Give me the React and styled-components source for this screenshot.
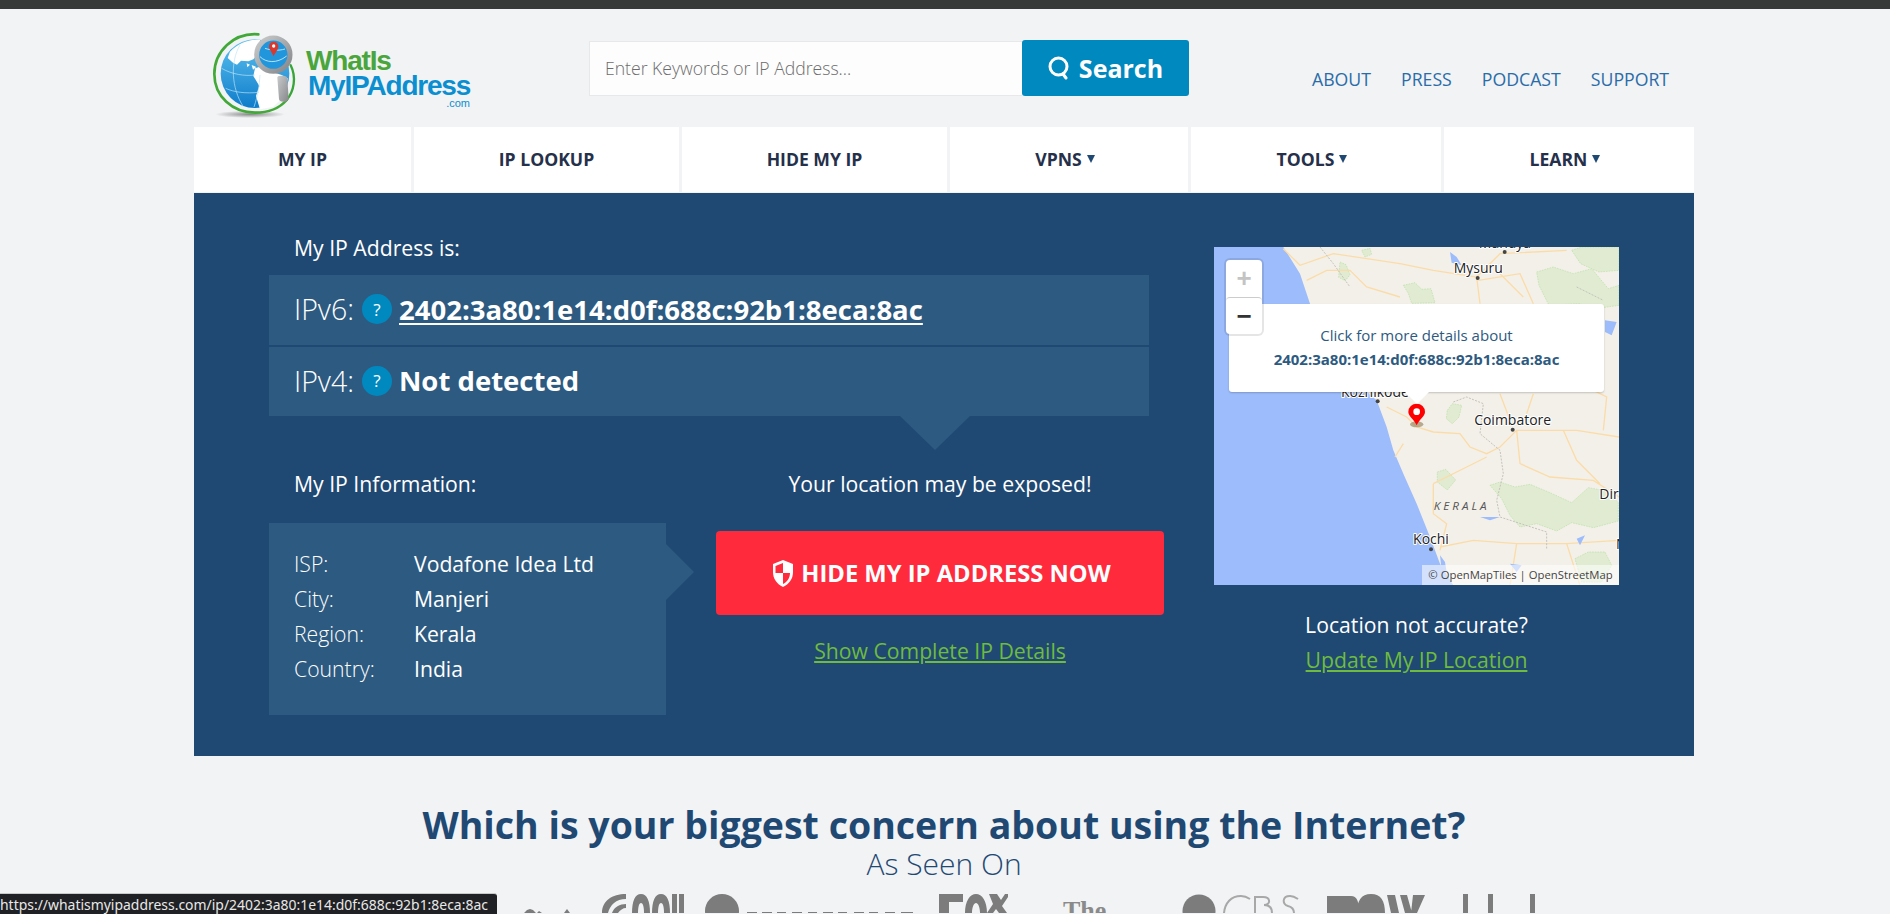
import React from "react";
import styled, { createGlobalStyle } from "styled-components";

const Global = createGlobalStyle`
  html, body { margin: 0; padding: 0; height: 914px; overflow: hidden; background: #f1f3f5; }
  * { box-sizing: border-box; }
  body { font-family: "Open Sans", "Liberation Sans", sans-serif; }
`;
const TopStrip = styled.div`height: 9px; background: #373838;`;
const Page = styled.div`width: 1500px; margin-left: 194px;`;
const Header = styled.header`height: 118px; display: flex;`;
const Logo = styled.a`width: 395px; height: 118px; position: relative; display: block; flex: none;`;
const LogoArt = styled.svg`position: absolute; left: 11px; top: 16px;`;
const LogoText = styled.div`
  position: absolute; left: 112px; top: 39px; width: 164px;
  font-family: "Liberation Sans", Arial, sans-serif; font-weight: 700;
`;
const LogoGreen = styled.div`color: #4aa63c; font-size: 28px; line-height: 25px; letter-spacing: -1.2px;`;
const LogoBlue = styled.div`color: #0b8fd0; font-size: 28px; line-height: 25px; margin-left: 2px; letter-spacing: -1.2px; white-space: nowrap;`;
const LogoCom = styled.div`color: #0b8fd0; font-size: 11px; line-height: 11px; font-weight: 400; text-align: right;`;
const SearchForm = styled.form`display: flex; margin-top: 31px; height: 56px; align-items: flex-start;`;
const SearchInput = styled.div`
  width: 433px; height: 55px; margin-top: 1px; background: #fdfdfd; border: 1px solid #e7e8ea; border-right: none;
  padding-left: 15px; font-size: 17.6px; font-weight: 300; color: #6c6c6c; line-height: 53px;
`;
const SearchButton = styled.div`
  width: 167px; height: 56px; background: #0089bf; border-radius: 3px; color: #fff; font-weight: 700; font-size: 25px;
  display: flex; align-items: center; justify-content: center; gap: 9px;
`;
const TopLinks = styled.nav`display: flex; gap: 30px; margin-left: 123px; margin-top: 57px; height: 26px;`;
const TopLink = styled.a`color: #2b6ca8; font-size: 17.7px; line-height: 26px;`;
const NavBar = styled.nav`
  display: grid; grid-template-columns: 217px 265px 265px 238px 250px 1fr; column-gap: 3px; height: 65px; margin-bottom: 1px;
`;
const NavCell = styled.a`
  background: #fff; color: #25304a; font-weight: 700; font-size: 17.6px; padding-bottom: 2px;
  display: flex; align-items: center; justify-content: center; gap: 5px;
`;
const Caret = styled.span`
  width: 0; height: 0; margin-right: 8px; border-left: 4px solid transparent; border-right: 4px solid transparent; border-top: 8px solid #1f4973;
`;
const Hero = styled.section`
  height: 563px; background: #1f4973; padding: 0 75px; display: grid; grid-template-columns: 880px 1fr; color: #fff;
`;
const Left = styled.div`display: flex; flex-direction: column;`;
const Label = styled.div`font-size: 21.2px; line-height: 28px; padding-left: 25px; font-weight: 400;`;
const IpLabelTop = styled(Label)`margin-top: 41px; margin-bottom: 13px;`;
const IpRow = styled.div`
  height: ${(p) => p.$h}px; background: #2d5a80; display: flex; align-items: center; padding: 0 0 2px 25px; margin-bottom: 2px; gap: 8px; position: relative;
  font-size: 28.5px; font-weight: 300;
`;
const Help = styled.span`
  width: 30px; height: 30px; border-radius: 50%; background: #0089bf; color: #fff; font-size: 17px; font-weight: 400;
  display: flex; align-items: center; justify-content: center;
`;
const IpLink = styled.a`font-size: 27.5px; font-weight: 700; margin-left: -1px; color: #fff; text-decoration: underline; text-decoration-thickness: 2px; text-underline-offset: 3px;`;
const IpStrong = styled.strong`font-size: 27.5px; font-weight: 700; margin-left: -1px;`;
const Notch = styled.span`
  position: absolute; left: 631px; top: 100%; width: 0; height: 0;
  border-left: 35px solid transparent; border-right: 35px solid transparent; border-top: 34px solid #2d5a80;
`;
const Lower = styled.div`display: grid; grid-template-columns: 425px 448px; column-gap: 22px; margin-top: 45px;`;
const InfoCol = styled.div`display: flex; flex-direction: column;`;
const InfoLabel = styled(Label)`margin-bottom: 25px; margin-top: 7px;`;
const InfoBox = styled.div`
  width: 397px; height: 192px; background: #2d5a80; padding: 23px 25px; position: relative;
  display: grid; grid-template-columns: 120px 1fr; grid-auto-rows: 35px; align-content: start; font-size: 21.2px; line-height: 35px;
  &::after {
    content: ""; position: absolute; left: 100%; top: 21px; width: 0; height: 0;
    border-top: 28px solid transparent; border-bottom: 28px solid transparent; border-left: 28px solid #2d5a80;
  }
`;
const InfoKey = styled.span`font-weight: 300;`;
const InfoVal = styled.span`font-weight: 400;`;
const CtaCol = styled.div`display: flex; flex-direction: column; align-items: center;`;
const Warn = styled.div`font-size: 21.2px; line-height: 28px; margin-top: 7px; margin-bottom: 33px;`;
const Cta = styled.a`
  width: 448px; height: 84px; background: #ff2a3c; border-radius: 4px; color: #fff; font-weight: 700; font-size: 23.75px;
  display: flex; align-items: center; justify-content: center; gap: 6px; padding-left: 2px;
`;
const GreenLink = styled.a`color: #6ebb3e; font-size: 21.2px; line-height: 28px; text-decoration: underline;`;
const CtaLink = styled(GreenLink)`margin-top: 22px;`;
const Right = styled.div`padding-top: 54px; display: flex; flex-direction: column; align-items: center; width: 405px; margin-left: 65px;`;
const MapBox = styled.div`width: 405px; height: 338px; position: relative; overflow: hidden; background: #9dbcfb; flex: none;`;
const MapArt = styled.svg`display: block;`;
const ZoomCtl = styled.div`
  position: absolute; left: 12px; top: 13px; width: 36px; height: 74px; background: #fff; border-radius: 4px; box-shadow: 0 0 0 2px rgba(0,0,0,.1);
  display: flex; flex-direction: column; z-index: 2;
`;
const ZoomBtn = styled.div`
  height: 50%; color: ${(p) => p.$off ? "#c4c4c4" : "#333"}; display: flex; align-items: center; justify-content: center;
  font-family: "Liberation Sans", sans-serif; font-weight: 700; font-size: 26px;
  & + & { border-top: 1px solid #ccc; border-radius: 4px; }
`;
const Popup = styled.div`
  position: absolute; left: 15px; top: 57px; width: 375px; height: 88px; background: #fff; border-radius: 3px; text-align: center; color: #2d5a80;
  padding-top: 19px; font-size: 15px; line-height: 24px; box-shadow: 0 1px 2px rgba(0,0,0,.2);
  &::after {
    content: ""; position: absolute; left: 176px; top: 100%; width: 0; height: 0;
    border-left: 12px solid transparent; border-right: 12px solid transparent; border-top: 12px solid #fff;
  }
`;
const PopupIp = styled.div`font-weight: 700; font-size: 15px;`;
const Attrib = styled.div`
  position: absolute; right: 0; bottom: 0; height: 20px; width: 197px; background: rgba(255,255,255,.55); color: #444; font-size: 11.3px; line-height: 20px; text-align: center; white-space: nowrap;
`;
const NotAccurate = styled.div`font-size: 21.2px; line-height: 28px; margin-top: 26px; white-space: nowrap;`;
const AccLink = styled(GreenLink)`margin-top: 7px; white-space: nowrap;`;
const Concern = styled.section`color: #1f4973; padding-top: 44px;`;
const ConcernTitle = styled.h2`margin: 0; font-size: 37.5px; font-weight: 700; line-height: 50px; text-align: center;`;
const SeenOn = styled.div`font-size: 30px; font-weight: 300; line-height: 34px; margin-top: -3px; text-align: center;`;
const Press = styled.svg`display: block; margin: 8px 0 0 306px; overflow: hidden;`;
const Status = styled.div`
  position: fixed; left: 0; bottom: 0; height: 21px; width: 497px; background: #202124; color: #e8e8e8; border-top-right-radius: 3px;
  font-family: "Noto Sans", "Open Sans", sans-serif; font-size: 13.95px; line-height: 21px; white-space: nowrap; overflow: hidden; border-top: 1px solid #c9c9c9;
`;

const Globe = () => (
  <LogoArt width="95" height="100" viewBox="0 0 285 300">
    <defs>
      <linearGradient id="g1" x1="0" y1="0" x2="0" y2="1"><stop offset="0" stopColor="#5cc1ee"/><stop offset="1" stopColor="#0f7ccb"/></linearGradient>
      <radialGradient id="sh"><stop offset="0" stopColor="#8a8a8a"/><stop offset="1" stopColor="#f1f3f5"/></radialGradient>
      <linearGradient id="ring" x1="0" y1="0" x2="1" y2="1"><stop offset="0" stopColor="#c9cacc"/><stop offset="1" stopColor="#85878a"/></linearGradient>
    </defs>
    <ellipse cx="135" cy="268" rx="105" ry="11" fill="url(#sh)"/>
    <circle cx="150" cy="146" r="103" fill="url(#g1)"/>
    <path d="M75 80C100 55 130 42 165 45l5 30-25 28-15 6-22-2-12 12-12-6-16-14z" fill="#fff"/>
    <path d="M150 130l25-8 30 20 25 8 18 10-8 50-35 35-40 8-12-40 10-30-18-30z" fill="#fff"/>
    <path d="M125 115l10 4-8 8zM140 120l14 6-10 8z" fill="#fff"/>
    <path d="M50 130c30 18 70 24 100 20M62 190c26 12 60 16 100 12M105 60c-30 50-26 130 10 185M165 150c-2 30-6 60-18 96" stroke="#bde6f8" strokeWidth="2" fill="none"/>
    <path d="M160 28C85 22 28 80 28 147c0 68 55 116 122 116 42 0 76-16 95-38" fill="none" stroke="#42a838" strokeWidth="8" strokeLinecap="round"/>
    <path d="M245 225c22-26 30-68 12-104" fill="none" stroke="#38a538" strokeWidth="7" strokeLinecap="round"/>
    <path d="M217 158c0-4 3-6 14-6 12 0 15 3 16 8l4 62c0 4-6 8-16 8-8 0-13-3-13-8z" fill="url(#ring)"/>
    <circle cx="205" cy="89" r="50" fill="#2296dc" stroke="url(#ring)" strokeWidth="15"/>
    <path d="M165 95c18 18 50 22 80-2M180 70c18 6 40 8 60 2" stroke="#d7f1fb" strokeWidth="2.5" fill="none"/>
    <path d="M206 94c-5-12-14-20-14-30a14 14 0 0 1 28 0c0 10-9 18-14 30z" fill="#d8382e"/>
    <circle cx="206" cy="63" r="5" fill="#fff"/>
  </LogoArt>
);

const MapDrawing = () => (
  <MapArt width="405" height="338" viewBox="42 50 1215 1014">
    <path d="M250 50L300 130L330 220L400 400L530 510L560 590L580 660L610 730L650 820L690 920L720 1000L760 1065H1260V50Z" fill="#f3f0e9"/>
    <g fill="#e0ebd1" stroke="#b9dfa6" strokeWidth="2" strokeDasharray="5 3">
      <path d="M420 95l18 8 12 30-14 18-20-10zM485 60l25-6 5 18-20 8zM610 165l35-8 20 20 28-2 12 42-70 2-10-30z"/>
      <path d="M1010 125l50-15 60 20 55-15 50 60 32-10v60l-70 10-50-15-90 5-30-60z"/>
      <path d="M1115 60l30-10h112v70l-60 5-55-25z"/>
      <path d="M742 540l15-20 28 5-8 35-20 20-18-15zM712 725l25-8 30 32-25 30-30-24z"/>
      <path d="M870 765l30-10 45 15 45-8 60 25 65 30 50-45 55 10 35 35v55l-75 20-65-15-45 25-60-22-50 10-30-35-25-50z"/>
      <path d="M1125 985l40-20 50 0 20 40-30 50h-60z"/>
    </g>
    <g fill="none" stroke="#fbdca8" strokeWidth="4">
      <path d="M250 55l50 50 100-35 200 30 100 20 130 20 10 80M830 140l70-70 200-10M835 150l125-20 40 90M900 130l70 70"/>
      <path d="M320 150l60-30 70 0 50 50 100 30"/>
      <path d="M560 530l60 30 30 30 50 15 80 5 30 40 50 20 40-20 50-50h100l80 0 127 20"/>
      <path d="M950 600l10 100 90 40 130 10 77 50M1090 600l40 90 70 70M700 760l100-50 60-30"/>
      <path d="M700 760v90l40 30-20 80M720 950l100-20 130 10 150 0 157-10M610 640l-25 40M950 940l-20 125M1100 940l40 125"/>
      <path d="M1180 480l40 20-10 100M1000 490l-20 60M900 490l30 80"/>
    </g>
    <g fill="none" stroke="#c4c2bd" strokeWidth="3" strokeDasharray="6 4">
      <path d="M360 50l40 50 50 70M1130 170l80 40M760 515l40-15 50 20-10 90 60 50 10 70-20 80 10 50 140 45v50"/>
    </g>
    <path d="M750 65l20 15 15 25-30-8zM1215 270l35 5-15 40-20-10zM840 860h60l-30 10zM1130 925l25-10-15 30zM720 975l15 20 5 30-15-5zM930 1000l35 5-15 20z" fill="#9dbcfb"/>
    <g fontFamily="'Open Sans',sans-serif" fontSize="42" fill="#222" stroke="#fff" strokeWidth="6" paintOrder="stroke" strokeLinejoin="round">
      <text x="835" y="127" textAnchor="middle">Mysuru</text>
      <text x="938" y="583" textAnchor="middle">Coimbatore</text>
      <text x="693" y="940" textAnchor="middle">Kochi</text>
      <text x="1198" y="805">Dir</text>
      <text x="1248" y="955">N</text>
      <text x="915" y="52" textAnchor="middle">Mandya</text>
      <text x="525" y="500" textAnchor="middle">Kozhikode</text>
    </g>
    <text x="785" y="838" textAnchor="middle" fontFamily="'Open Sans',sans-serif" fontStyle="italic" fontSize="35" letterSpacing="9" fill="#555">KERALA</text>
    <g fill="#444"><circle cx="833" cy="143" r="6"/><circle cx="938" cy="598" r="6"/><circle cx="693" cy="957" r="6"/><circle cx="533" cy="513" r="6"/><circle cx="914" cy="65" r="6"/></g>
    <ellipse cx="650" cy="582" rx="20" ry="9" fill="#8c7a55" opacity=".6"/>
    <path d="M650 585c-8-18-25-28-25-40a25 25 0 0 1 50 0c0 12-17 22-25 40z" fill="#f00"/>
    <circle cx="650" cy="544" r="10" fill="#fff"/>
  </MapArt>
);

const PressLogos = () => (
  <Press width="1240" height="24" viewBox="0 0 1240 24">
    <g fill="#7c7c7c">
      <path d="M24 24l3-3 3-1 3 1 3 3zM37 24l2-2 3 2zM64 24l3-4 3 4z"/>
      <path d="M102 24c0-12 10-19 24-19v5c-10 0-16 6-18 14zM112 24c2-6 8-9 14-9v4c-3 0-6 2-8 5zM132 24c0-12 3-19 9-19s9 7 9 19h-6c0-6-1-10-3-10s-3 4-3 10zM152 24c0-12 3-19 9-19s9 7 9 19h-6c0-6-1-10-3-10s-3 4-3 10zM172 5h5v19h-5zM179 5h5v19h-5z"/>
      <circle cx="222" cy="22" r="17"/>
      <path d="M247 23h10v1h-10zM262 23h10v1h-10zM277 23h9v1h-9zM292 23h10v1h-10zM308 23h9v1h-9zM323 23h10v1h-10zM338 23h9v1h-9zM354 23h10v1h-10zM369 23h9v1h-9zM385 23h10v1h-10zM401 23h12v1h-12z"/>
      <path d="M439 5h24v8h-14v11h-10zM465 24c0-12 5-19 11-19s11 7 11 19h-7c0-6-2-10-4-10s-4 4-4 10zM489 5h8l4 6 4-6h3v3l-6 9 5 7h-8l-3-4-3 4h-6l6-9z"/>
      <circle cx="699" cy="22" r="16.500"/>
      <path d="M827 7h24c6 0 8 5 8 17h-32zM857 24c0-12 4-19 14-19s14 7 14 19zM887 6h8l4 18h-8zM900 6h7l5 18h-7zM913 6h12l-8 18h-6z"/>
      <path d="M963 5h5v19h-5zM988 5h5v19h-5zM1030 5h5v19h-5z"/>
    </g>
    <g fill="none" stroke="#a8a8a8" strokeWidth="2">
      <path d="M750 10c-3-2-6-3-9-3-10 0-16 7-17 17M755 24V8h8c8 0 8 8 1 8 6 0 8 4 8 8M798 10c-3-2-5-3-8-3-8 0-8 8-2 10 4 1 6 3 6 7"/>
    </g>
    <text x="563" y="30" fontFamily="'Liberation Serif',serif" fontWeight="700" fontSize="26" fill="#8a8a8a">The</text>
  </Press>
);

export default function App() {
  return (
    <>
      <Global />
      <TopStrip />
      <Page>
        <Header>
          <Logo href="#">
            <Globe />
            <LogoText>
              <LogoGreen>WhatIs</LogoGreen>
              <LogoBlue>MyIPAddress</LogoBlue>
              <LogoCom>.com</LogoCom>
            </LogoText>
          </Logo>
          <SearchForm>
            <SearchInput>Enter Keywords or IP Address...</SearchInput>
            <SearchButton>
              <svg width="22" height="24" viewBox="0 0 22 24" fill="none" stroke="#fff" strokeWidth="3" strokeLinecap="round"><circle cx="10.5" cy="10.5" r="8.5"/><path d="M15 18l3 4"/></svg>
              Search
            </SearchButton>
          </SearchForm>
          <TopLinks>
            <TopLink>ABOUT</TopLink>
            <TopLink>PRESS</TopLink>
            <TopLink>PODCAST</TopLink>
            <TopLink>SUPPORT</TopLink>
          </TopLinks>
        </Header>
        <NavBar>
          <NavCell>MY IP</NavCell>
          <NavCell>IP LOOKUP</NavCell>
          <NavCell>HIDE MY IP</NavCell>
          <NavCell>VPNS <Caret /></NavCell>
          <NavCell>TOOLS <Caret /></NavCell>
          <NavCell>LEARN <Caret /></NavCell>
        </NavBar>
        <Hero>
          <Left>
            <IpLabelTop>My IP Address is:</IpLabelTop>
            <IpRow $h={70}>IPv6: <Help>?</Help> <IpLink>2402:3a80:1e14:d0f:688c:92b1:8eca:8ac</IpLink></IpRow>
            <IpRow $h={69}>IPv4: <Help>?</Help> <IpStrong>Not detected</IpStrong><Notch /></IpRow>
            <Lower>
              <InfoCol>
                <InfoLabel>My IP Information:</InfoLabel>
                <InfoBox>
                  <InfoKey>ISP:</InfoKey><InfoVal>Vodafone Idea Ltd</InfoVal>
                  <InfoKey>City:</InfoKey><InfoVal>Manjeri</InfoVal>
                  <InfoKey>Region:</InfoKey><InfoVal>Kerala</InfoVal>
                  <InfoKey>Country:</InfoKey><InfoVal>India</InfoVal>
                </InfoBox>
              </InfoCol>
              <CtaCol>
                <Warn>Your location may be exposed!</Warn>
                <Cta>
                  <svg width="24" height="27" viewBox="0 0 22 27"><path d="M11 0l10 4v8c0 7-4 12-10 15C5 24 1 19 1 12V4z" fill="#fff"/><path d="M11 3v10H3.500V6zM11 13h7c0 5-3 9-7 11z" fill="#ff2a3c"/></svg>
                  HIDE MY IP ADDRESS NOW
                </Cta>
                <CtaLink>Show Complete IP Details</CtaLink>
              </CtaCol>
            </Lower>
          </Left>
          <Right>
            <MapBox>
              <MapDrawing />
              <ZoomCtl><ZoomBtn $off>+</ZoomBtn><ZoomBtn>−</ZoomBtn></ZoomCtl>
              <Popup>
                Click for more details about
                <PopupIp>2402:3a80:1e14:d0f:688c:92b1:8eca:8ac</PopupIp>
              </Popup>
              <Attrib>© OpenMapTiles | OpenStreetMap</Attrib>
            </MapBox>
            <NotAccurate>Location not accurate?</NotAccurate>
            <AccLink>Update My IP Location</AccLink>
          </Right>
        </Hero>
        <Concern>
          <ConcernTitle>Which is your biggest concern about using the Internet?</ConcernTitle>
          <SeenOn>As Seen On</SeenOn>
          <PressLogos />
        </Concern>
      </Page>
      <Status>https://whatismyipaddress.com/ip/2402:3a80:1e14:d0f:688c:92b1:8eca:8ac</Status>
    </>
  );
}
